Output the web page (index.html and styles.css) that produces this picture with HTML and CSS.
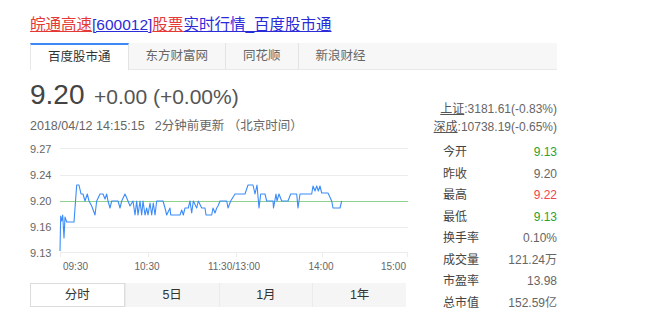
FILE: index.html
```html
<!DOCTYPE html>
<html lang="zh-CN">
<head>
    <meta charset="UTF-8">
    <title>皖通高速[600012]股票实时行情_百度股市通</title>
    <link rel="stylesheet" href="styles.css">
</head>
<body>
    <div class="page">
        <h1 class="title">
            <a class="red">皖通高速</a><a class="blue">[600012]</a><a class="red">股票</a><a class="blue">实时行情_百度股市通</a>
        </h1>

        <div class="source-tabs">
            <div class="source-tab active">百度股市通</div>
            <div class="source-tab">东方财富网</div>
            <div class="source-tab">同花顺</div>
            <div class="source-tab">新浪财经</div>
        </div>

        <div class="main">
            <div class="left">
                <div class="price-row">
                    <span class="price">9.20</span>
                    <span class="change">+0.00 (+0.00%)</span>
                </div>
                <div class="update-time">2018/04/12 14:15:15<span class="gap"></span>2分钟前更新 （北京时间）</div>

                <!-- 分时图 -->
                <svg class="chart" width="380" height="132" viewBox="30 140 380 132">
                    <g stroke="#ececec" stroke-width="1">
                        <line x1="60" y1="147.5" x2="408" y2="147.5"/>
                        <line x1="60" y1="174.5" x2="408" y2="174.5"/>
                        <line x1="60" y1="226.5" x2="408" y2="226.5"/>
                        <line x1="60" y1="251.5" x2="408" y2="251.5"/>
                        <line x1="60.5" y1="251" x2="60.5" y2="256"/>
                        <line x1="148.5" y1="251" x2="148.5" y2="256"/>
                        <line x1="236.5" y1="251" x2="236.5" y2="256"/>
                        <line x1="322.5" y1="251" x2="322.5" y2="256"/>
                        <line x1="407.5" y1="251" x2="407.5" y2="256"/>
                    </g>
                    <line x1="60" y1="200.5" x2="408" y2="200.5" stroke="#8fd28f" stroke-width="1.2"/>
                    <polyline fill="none" stroke="#3b8cfa" stroke-width="1.1" stroke-linejoin="round"
                        points="60,250 60.7,215 61.7,220 62.7,214 64,237 65,216 66.7,221 74,221 76.7,184 79,184 81,193 83,193 85,200 87.3,193 89,200 91.7,205 95,214 96.7,200 100,193 103,193 105,198 106.7,193 108,200 110,207 111.7,200 118,200 120,207 121.7,200 125,193 128,200 130,205 133,200 135,214 136.7,200 138,214 140,200 141.7,214 143,200 145,214 146.7,207 148,214 150,202 151.7,214 153.3,202 155,214 156.7,200 163,200 165,207 166.7,214 170,207 170.7,214 180,214 181.7,209 183.3,214 185,207 188.3,207 190,200 191.7,212 193.3,200 196.7,207 198.3,200 201.7,207 205,207 206,214 211.7,214 213,207 215,212 216.7,207 218,205 220,200 226.7,200 228,207 230.7,200 235,193 245,193 248,184 253,184 255,193 257,184 259,207 260.7,193 265,193 266.7,200 273,200 273.5,207 276,193 277,200 279,193 281.7,200 288,200 290.7,193 296.7,193 298,207 300,193 311.7,193 313,185 315,190 316.7,185 318.3,190 320,185 321.7,192 328,192 331.7,200 333,207 340,207 341.7,200"/>
                    <g class="axis-y">
                        <text x="30" y="151.5">9.27</text>
                        <text x="30" y="178">9.24</text>
                        <text x="30" y="204">9.20</text>
                        <text x="30" y="230">9.16</text>
                        <text x="30" y="255.5">9.13</text>
                    </g>
                    <g class="axis-x">
                        <text x="63" y="269">09:30</text>
                        <text x="147" y="269" text-anchor="middle">10:30</text>
                        <text x="234" y="269" text-anchor="middle">11:30/13:00</text>
                        <text x="321" y="269" text-anchor="middle">14:00</text>
                        <text x="406" y="269" text-anchor="end">15:00</text>
                    </g>
                </svg>

                <div class="period-tabs">
                    <div class="period-tab active">分时</div>
                    <div class="period-tab">5日</div>
                    <div class="period-tab">1月</div>
                    <div class="period-tab">1年</div>
                </div>
            </div>

            <div class="right">
                <div class="index-line"><u>上证</u>:3181.61(-0.83%)</div>
                <div class="index-line"><u>深成</u>:10738.19(-0.65%)</div>

                <div class="quote-list">
                    <div class="quote-row"><span>今开</span><span class="up-green">9.13</span></div>
                    <div class="quote-row"><span>昨收</span><span>9.20</span></div>
                    <div class="quote-row"><span>最高</span><span class="up-red">9.22</span></div>
                    <div class="quote-row"><span>最低</span><span class="up-green">9.13</span></div>
                    <div class="quote-row"><span>换手率</span><span>0.10%</span></div>
                    <div class="quote-row"><span>成交量</span><span>121.24万</span></div>
                    <div class="quote-row"><span>市盈率</span><span>13.98</span></div>
                    <div class="quote-row"><span>总市值</span><span>152.59亿</span></div>
                </div>
            </div>
        </div>
    </div>
</body>
</html>
```

FILE: styles.css
```css
:root {
    --red: #e53935;
    --blue: #2b2bd9;
    --tab-blue: #3d8af7;
    --text: #333;
    --text-light: #666;
}

body {
    margin: 0;
    background: #fff;
    font-family: "Liberation Sans", "Noto Sans CJK SC", sans-serif;
    color: var(--text);
}

.page {
    width: 527px;
    padding: 15px 0 0 30px;
}

/* 标题 */
.title {
    margin: 0;
    font-size: 15.5px;
    font-weight: normal;
    line-height: 20px;
}

.title a {
    text-decoration: underline;
}

.title .red { color: var(--red); }
.title .blue { color: var(--blue); }

/* 数据来源标签 */
.source-tabs {
    margin-top: 8px;
    display: flex;
    height: 27px;
    background: #f7f7f7;
    border-bottom: 1px solid #e8e8e8;
    box-sizing: border-box;
}

.source-tab {
    padding: 0 17px;
    font-size: 12.5px;
    line-height: 26px;
    color: var(--text-light);
    border-right: 1px solid #e3e3e3;
}

.source-tab:last-child {
    border-right: none;
}

.source-tab.active {
    background: #fff;
    color: var(--text);
    border-top: 2px solid var(--tab-blue);
    border-left: 1px solid #e8e8e8;
    line-height: 24px;
    margin-bottom: -1px;
}

/* 主体 */
.main {
    display: flex;
}

.left {
    width: 380px;
}

.price-row {
    margin-top: 9px;
    line-height: 32px;
    white-space: nowrap;
}

.price {
    font-size: 28px;
    color: #444;
}

.change {
    margin-left: 5px;
    font-size: 21px;
    color: #555;
}

.update-time {
    margin-top: 3px;
    font-size: 12.5px;
    line-height: 16px;
    color: var(--text-light);
}

.update-time .gap {
    display: inline-block;
    width: 10px;
}

.chart {
    display: block;
    margin-top: 7px;
}

.chart text {
    fill: #666;
    font-family: "Liberation Sans", sans-serif;
}

.axis-y text { font-size: 11px; }
.axis-x text { font-size: 10px; }

/* 周期切换 */
.period-tabs {
    margin-top: 10px;
    width: 376px;
    height: 24px;
    display: flex;
    background: #f5f5f5;
}

.period-tab {
    flex: 1;
    text-align: center;
    font-size: 12.5px;
    line-height: 24px;
    color: var(--text);
    border-left: 1px solid #ebebeb;
}

.period-tab:first-child {
    border-left: none;
}

.period-tab.active {
    background: #fff;
    border: 1px solid #dcdcdc;
    line-height: 22px;
}

/* 右侧行情 */
.right {
    width: 124px;
    margin-left: auto;
    margin-top: 30px;
    font-size: 12px;
    color: var(--text-light);
}

.index-line {
    text-align: right;
    line-height: 18px;
    white-space: nowrap;
}

.index-line u {
    color: #555;
}

.quote-list {
    margin-top: 6px;
    padding-left: 10px;
}

.quote-row {
    display: flex;
    justify-content: space-between;
    height: 21.5px;
    line-height: 21.5px;
}

.quote-row span:first-child {
    color: #444;
}

.up-green { color: #2fa12f; }
.up-red { color: #f0454f; }
```
